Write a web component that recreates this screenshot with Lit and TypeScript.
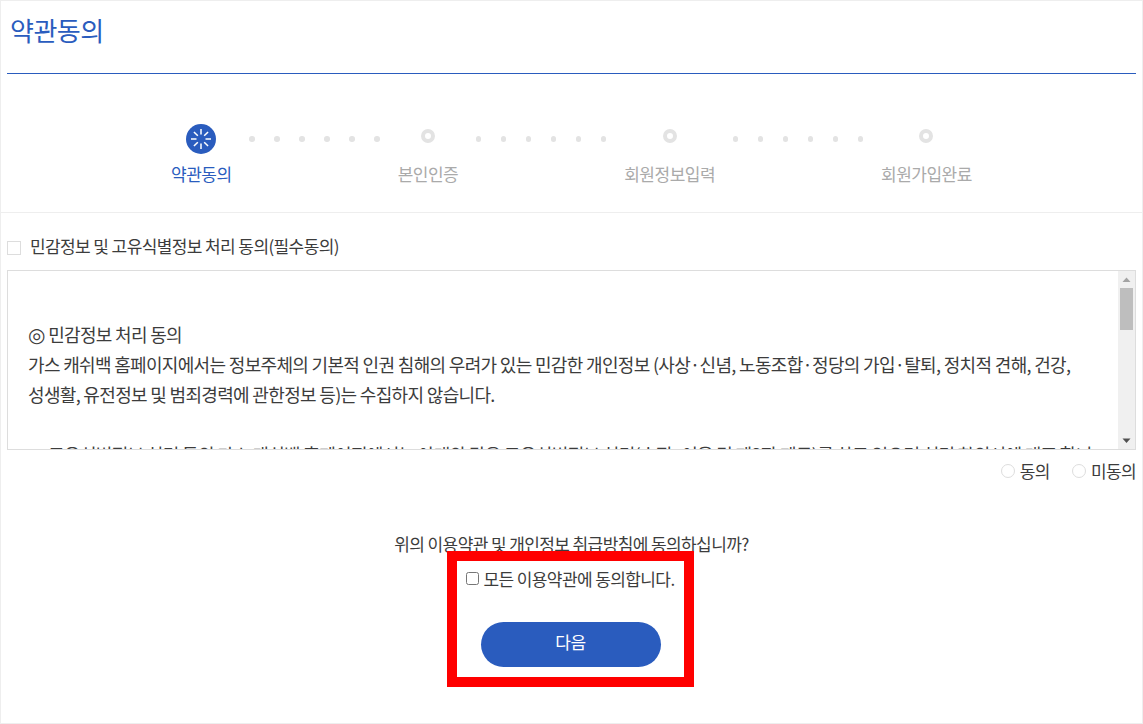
import { LitElement, html, svg, css } from "lit";
import { customElement } from "lit/decorators.js";

const steps = ["약관동의", "본인인증", "회원정보입력", "회원가입완료"];

@customElement("app-root")
export class AppRoot extends LitElement {
  static styles = css`
    :host {
      display: block;
      box-sizing: border-box;
      width: 1143px;
      height: 724px;
      overflow: hidden;
      background: #fff;
      border: 1px solid #eee;
      font-family: "Noto Sans CJK KR", "Noto Sans", sans-serif;
      color: #3c3c3c;
      font-size: 17px;
      letter-spacing: -0.6px;
    }
    .head {
      margin: 0 6px;
      height: 72px;
      border-bottom: 1px solid #2a5cbe;
    }
    h1 {
      margin: 0;
      padding: 10px 3px 0;
      font-size: 26px;
      line-height: 37px;
      font-weight: 400;
      color: #2a5cbe;
      letter-spacing: -0.5px;
    }
    .steps {
      height: 138px;
      border-bottom: 1px solid #eee;
      display: flex;
      justify-content: center;
      align-items: flex-start;
    }
    .step {
      display: flex;
      flex-direction: column;
      align-items: center;
      padding-top: 50px;
      color: #aaa;
      font-size: 17px;
      letter-spacing: -0.5px;
      white-space: nowrap;
    }
    .step.on { color: #2a5cbe; }
    .icon-box { height: 30px; display: flex; align-items: flex-start; justify-content: center; }
    .icon-box svg { display: block; }
    .ring {
      box-sizing: border-box;
      width: 14px;
      height: 14px;
      border: 4px solid #e3e3e3;
      border-radius: 50%;
      margin-top: 5px;
    }
    .step span { margin-top: 8px; line-height: 24px; }
    .dots {
      display: flex;
      gap: 19.5px;
      margin: 62px 17.75px 0;
    }
    .dots i {
      display: block;
      width: 5.5px;
      height: 5.5px;
      border-radius: 50%;
      background: #e3e3e3;
    }
    .terms { padding: 0 6px; }
    .check-row {
      display: flex;
      align-items: center;
      height: 57px;
      padding-top: 8px;
      box-sizing: border-box;
      gap: 9px;
    }
    .fake-check {
      box-sizing: border-box;
      width: 14px;
      height: 14px;
      border: 1px solid #ddd;
      background: #fff;
      margin-top: 4px;
      flex: none;
    }
    .box {
      box-sizing: border-box;
      height: 180px;
      border: 1px solid #ddd;
      display: flex;
      overflow: hidden;
    }
    .text {
      flex: 1;
      min-width: 0;
      overflow: hidden;
      padding: 48px 40px 0 20px;
      line-height: 30px;
      font-size: 18px;
      letter-spacing: -0.67px;
    }
    .text p { margin: 0; }
    .text p + p { margin-top: 30px; white-space: nowrap; }
    .mark { font-family: "DejaVu Sans", sans-serif; font-size: 20px; line-height: 1; }
    .bar {
      width: 17px;
      flex: none;
      background: #f0f0f0;
      display: flex;
      flex-direction: column;
      align-items: center;
    }
    .bar svg { display: block; flex: none; }
    .thumb { width: 13px; height: 42px; background: #bebebe; flex: none; }
    .spacer { flex: 1; }
    .radios {
      display: flex;
      justify-content: flex-end;
      gap: 22px;
      height: 44px;
      padding-top: 8px;
      box-sizing: border-box;
      line-height: 26px;
    }
    .radios label { display: flex; align-items: center; gap: 5px; height: 26px; }
    .radios i {
      box-sizing: border-box;
      display: block;
      width: 14px;
      height: 14px;
      border: 1px solid #ddd;
      border-radius: 50%;
    }
    .agree {
      display: flex;
      flex-direction: column;
      align-items: center;
      padding-top: 35px;
    }
    .q {
      line-height: 30px;
      white-space: nowrap;
    }
    .red {
      box-sizing: border-box;
      width: 247px;
      height: 136px;
      margin: -8px 2px 0 0;
      border: 10px solid #f00;
      display: flex;
      flex-direction: column;
      align-items: center;
      background: #fff;
    }
    .all {
      display: flex;
      align-items: center;
      gap: 4px;
      height: 35px;
      white-space: nowrap;
    }
    .all input { width: 13px; height: 13px; margin: 0; }
    button {
      margin-top: 26px;
      width: 180px;
      height: 45px;
      border: 0;
      border-radius: 23px;
      background: #2a5cbe;
      color: #fff;
      font: inherit;
      font-size: 17px;
      letter-spacing: -0.5px;
      padding: 0 0 7px;
    }
  `;

  private spinner() {
    const rays = [0, 45, 90, 135, 180, 225, 270, 315];
    return html`<svg width="30" height="30" viewBox="0 0 30 30">
      <circle cx="15" cy="15" r="15" fill="#2a5cbe"></circle>
      ${rays.map(
        (a) => svg`<line x1="15" y1="5" x2="15" y2="10.5" stroke="#fff" stroke-width="1.5" transform="rotate(${a} 15 15)"></line>`
      )}
    </svg>`;
  }

  render() {
    return html`
      <div class="head"><h1>약관동의</h1></div>
      <div class="steps">
        ${steps.map(
          (s, i) => html`
            <div class="step ${i === 0 ? "on" : ""}">
              <div class="icon-box">${i === 0 ? this.spinner() : html`<div class="ring"></div>`}</div>
              <span>${s}</span>
            </div>
            ${i < 3
              ? html`<div class="dots">${[0, 1, 2, 3, 4, 5].map(() => html`<i></i>`)}</div>`
              : ""}
          `
        )}
      </div>
      <div class="terms">
        <div class="check-row"><div class="fake-check"></div>민감정보 및 고유식별정보 처리 동의(필수동의)</div>
        <div class="box">
          <div class="text">
            <p><span class="mark">◎</span> 민감정보 처리 동의<br />가스 캐쉬백 홈페이지에서는 정보주체의 기본적 인권 침해의 우려가 있는 민감한 개인정보 (사상·신념, 노동조합·정당의 가입·탈퇴, 정치적 견해, 건강, 성생활, 유전정보 및 범죄경력에 관한정보 등)는 수집하지 않습니다.</p>
            <p><span class="mark">◎</span> 고유식별정보 처리 동의 가스 캐쉬백 홈페이지에서는 아래와 같은 고유식별정보 처리(수집·이용 및 제3자 제공)를 하고 있으며 처리 항의서에 대조 합니</p>
          </div>
          <div class="bar">
            <svg width="17" height="17" viewBox="0 0 17 17"><path d="M4.5 11 L8.5 6.5 L12.5 11 Z" fill="#a3a3a3"></path></svg>
            <div class="thumb"></div>
            <div class="spacer"></div>
            <svg width="17" height="17" viewBox="0 0 17 17"><path d="M4.5 6.5 L8.5 11 L12.5 6.5 Z" fill="#505050"></path></svg>
          </div>
        </div>
        <div class="radios">
          <label><i></i>동의</label>
          <label><i></i>미동의</label>
        </div>
      </div>
      <div class="agree">
        <div class="q">위의 이용약관 및 개인정보 취급방침에 동의하십니까?</div>
        <div class="red">
          <label class="all"><input type="checkbox" />모든 이용약관에 동의합니다.</label>
          <button>다음</button>
        </div>
      </div>
    `;
  }
}
